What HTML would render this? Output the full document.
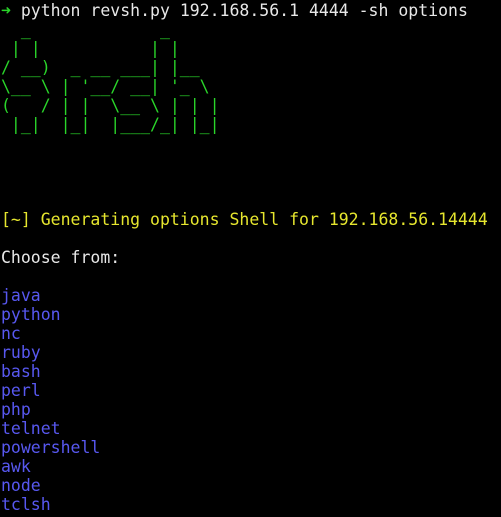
<!DOCTYPE html>
<html><head><meta charset="utf-8"><style>
html,body{margin:0;padding:0;background:#000;width:501px;height:517px;overflow:hidden}
pre{margin:0;padding:1px 0 0 1px;font-family:"DejaVu Sans Mono","Liberation Mono",monospace;font-size:16.5px;line-height:19px;color:#e8e8e8}
.g{color:#2ad52a}.y{color:#e6e62e}.b{color:#5858f0}.w{color:#e8e8e8}
</style></head><body><pre><span class="g">➜</span> python revsh.py 192.168.56.1 4444 -sh options
<span class="g">  _             _
 | |           | |
/ __)  _ __ ___| |__
\__ \ | '__/ __| '_ \
(   / | |  \__ \ | | |
 |_|  |_|  |___/_| |_|</span>




<span class="y">[~] Generating options Shell for 192.168.56.14444</span>

Choose from:

<span class="b">java
python
nc
ruby
bash
perl
php
telnet
powershell
awk
node
tclsh</span></pre></body></html>
